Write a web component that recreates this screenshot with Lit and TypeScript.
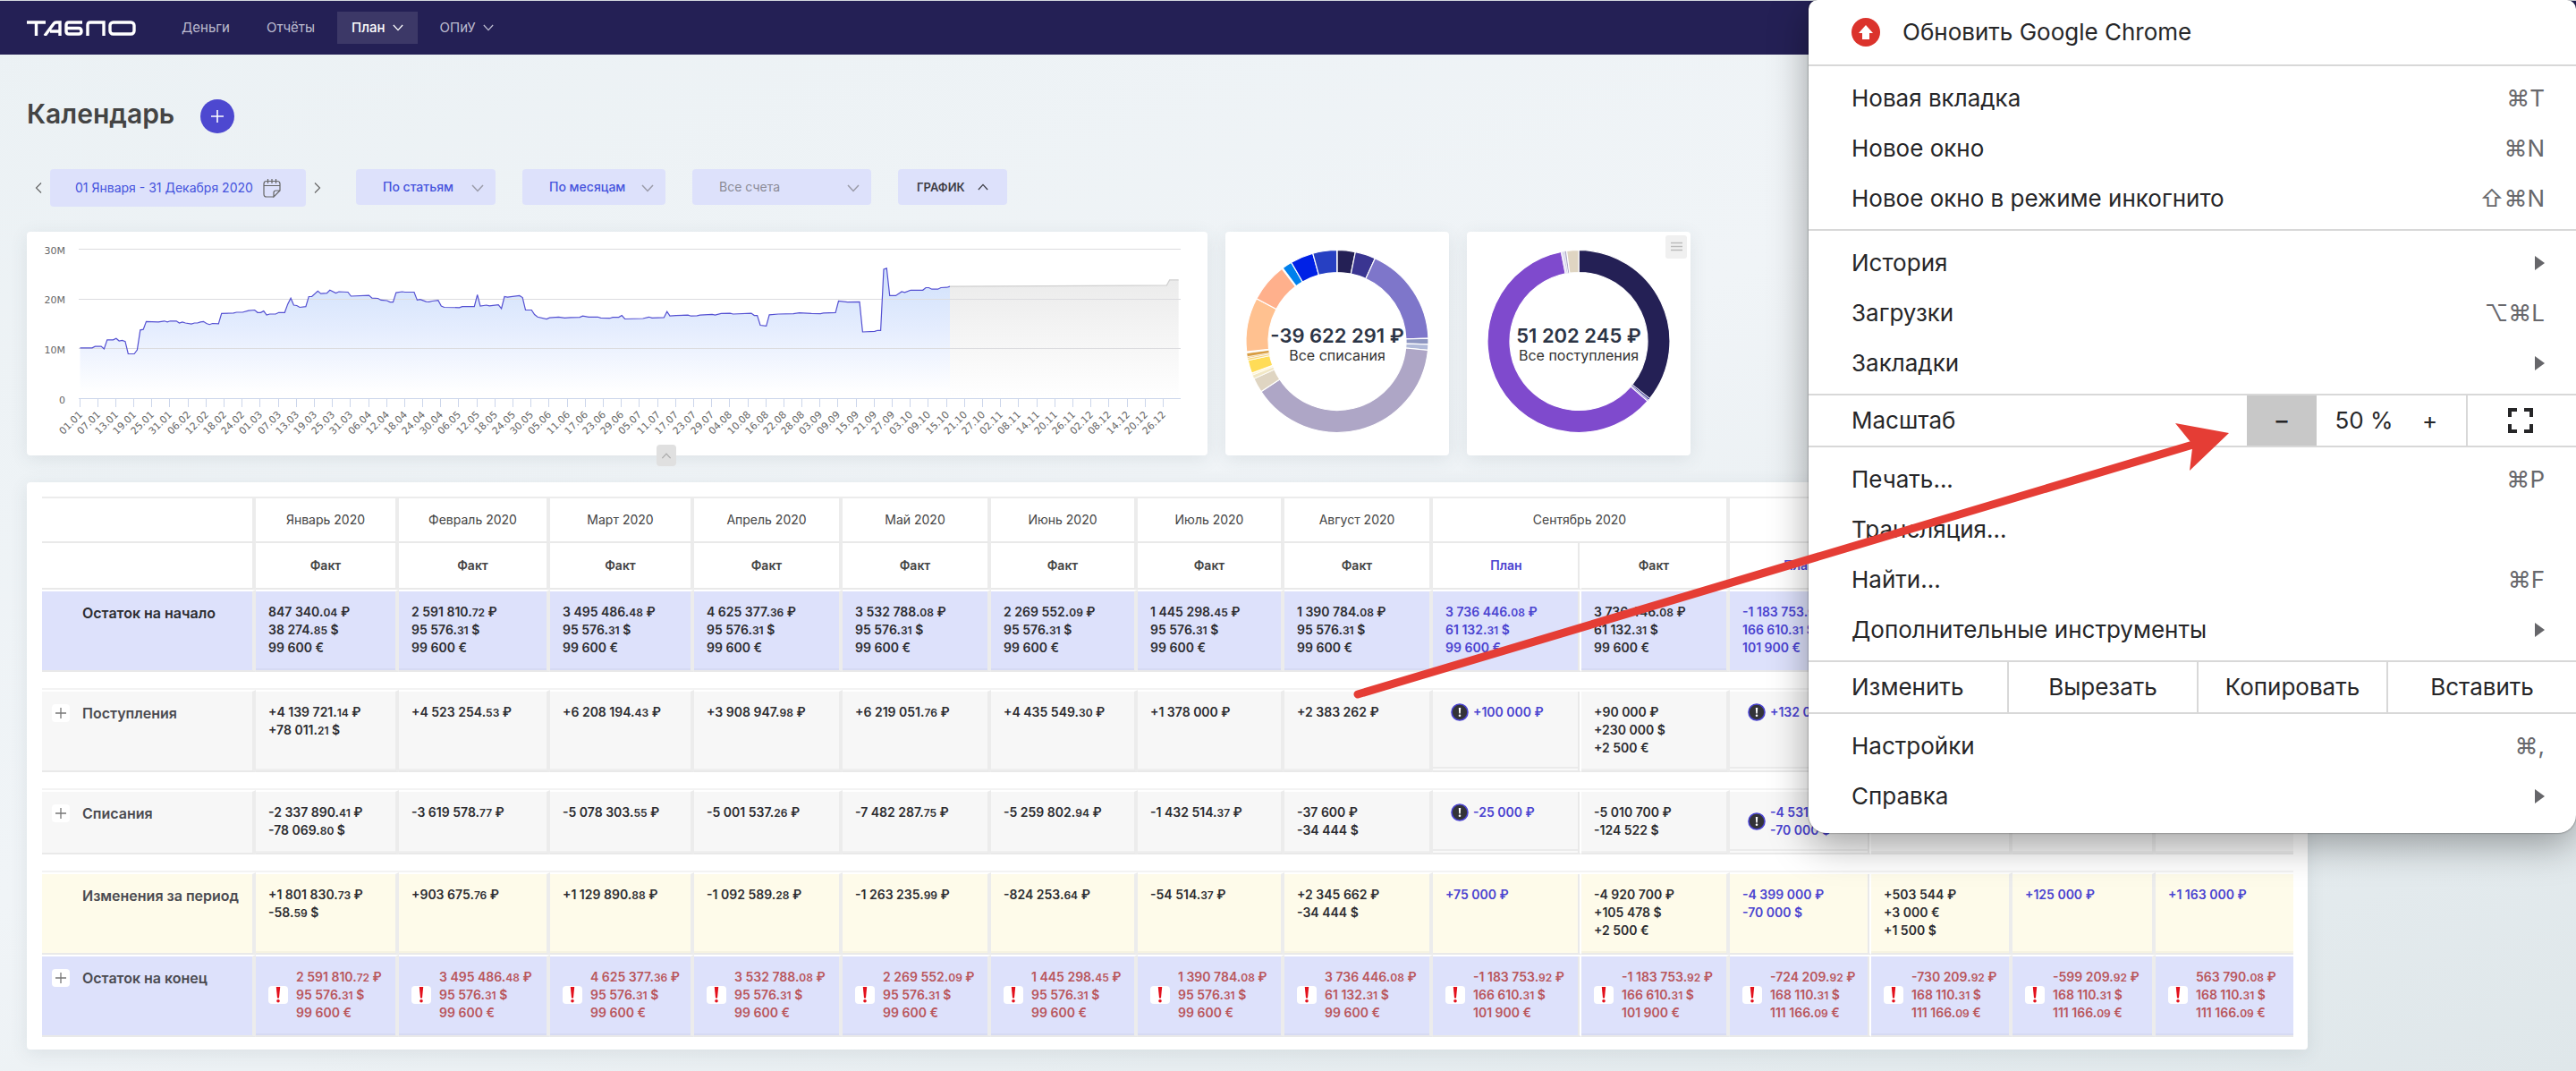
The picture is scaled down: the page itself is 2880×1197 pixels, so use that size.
import { LitElement, html, svg, css, nothing } from "lit";
import { customElement } from "lit/decorators.js";

type Cell = string[];

const LABEL_W = 239;
const COLS: { kind: "fact" | "plan"; w: number; title: string }[] = [
  { kind: "fact", w: 160, title: "Факт" }, { kind: "fact", w: 169, title: "Факт" },
  { kind: "fact", w: 161, title: "Факт" }, { kind: "fact", w: 166, title: "Факт" },
  { kind: "fact", w: 166, title: "Факт" }, { kind: "fact", w: 164, title: "Факт" },
  { kind: "fact", w: 164, title: "Факт" }, { kind: "fact", w: 166, title: "Факт" },
  { kind: "plan", w: 166, title: "План" }, { kind: "fact", w: 166, title: "Факт" },
  { kind: "plan", w: 158, title: "План" }, { kind: "fact", w: 158, title: "" },
  { kind: "plan", w: 160, title: "" }, { kind: "plan", w: 154, title: "" },
];
const MONTHS: { name: string; span: number }[] = [
  { name: "Январь 2020", span: 1 }, { name: "Февраль 2020", span: 1 }, { name: "Март 2020", span: 1 },
  { name: "Апрель 2020", span: 1 }, { name: "Май 2020", span: 1 }, { name: "Июнь 2020", span: 1 },
  { name: "Июль 2020", span: 1 }, { name: "Август 2020", span: 1 }, { name: "Сентябрь 2020", span: 2 },
  { name: "", span: 2 }, { name: "", span: 1 }, { name: "", span: 1 },
];

type Row = { label: string; tone: string; expand: boolean; mark?: "warn" | "info"; cells: Cell[]; dark?: boolean };
const ROWS: Row[] = [
  {
    label: "Остаток на начало", tone: "blue", expand: false, dark: true,
    cells: [
      ["847 340.04 ₽", "38 274.85 $", "99 600 €"],
      ["2 591 810.72 ₽", "95 576.31 $", "99 600 €"],
      ["3 495 486.48 ₽", "95 576.31 $", "99 600 €"],
      ["4 625 377.36 ₽", "95 576.31 $", "99 600 €"],
      ["3 532 788.08 ₽", "95 576.31 $", "99 600 €"],
      ["2 269 552.09 ₽", "95 576.31 $", "99 600 €"],
      ["1 445 298.45 ₽", "95 576.31 $", "99 600 €"],
      ["1 390 784.08 ₽", "95 576.31 $", "99 600 €"],
      ["3 736 446.08 ₽", "61 132.31 $", "99 600 €"],
      ["3 736 446.08 ₽", "61 132.31 $", "99 600 €"],
      ["-1 183 753.92 ₽", "166 610.31 $", "101 900 €"],
      [], [], [],
    ],
  },
  {
    label: "Поступления", tone: "gray", expand: true, mark: "info",
    cells: [
      ["+4 139 721.14 ₽", "+78 011.21 $"], ["+4 523 254.53 ₽"], ["+6 208 194.43 ₽"], ["+3 908 947.98 ₽"],
      ["+6 219 051.76 ₽"], ["+4 435 549.30 ₽"], ["+1 378 000 ₽"], ["+2 383 262 ₽"], ["+100 000 ₽"],
      ["+90 000 ₽", "+230 000 $", "+2 500 €"], ["+132 000 ₽"], [], [], [],
    ],
  },
  {
    label: "Списания", tone: "gray short", expand: true, mark: "info",
    cells: [
      ["-2 337 890.41 ₽", "-78 069.80 $"], ["-3 619 578.77 ₽"], ["-5 078 303.55 ₽"], ["-5 001 537.26 ₽"],
      ["-7 482 287.75 ₽"], ["-5 259 802.94 ₽"], ["-1 432 514.37 ₽"], ["-37 600 ₽", "-34 444 $"], ["-25 000 ₽"],
      ["-5 010 700 ₽", "-124 522 $"], ["-4 531 000 ₽", "-70 000 $"], [], [], [],
    ],
  },
  {
    label: "Изменения за период", tone: "yellow", expand: false,
    cells: [
      ["+1 801 830.73 ₽", "-58.59 $"], ["+903 675.76 ₽"], ["+1 129 890.88 ₽"], ["-1 092 589.28 ₽"],
      ["-1 263 235.99 ₽"], ["-824 253.64 ₽"], ["-54 514.37 ₽"], ["+2 345 662 ₽", "-34 444 $"], ["+75 000 ₽"],
      ["-4 920 700 ₽", "+105 478 $", "+2 500 €"], ["-4 399 000 ₽", "-70 000 $"],
      ["+503 544 ₽", "+3 000 €", "+1 500 $"], ["+125 000 ₽"], ["+1 163 000 ₽"],
    ],
  },
  {
    label: "Остаток на конец", tone: "blue red", expand: true, mark: "warn",
    cells: [
      ["2 591 810.72 ₽", "95 576.31 $", "99 600 €"],
      ["3 495 486.48 ₽", "95 576.31 $", "99 600 €"],
      ["4 625 377.36 ₽", "95 576.31 $", "99 600 €"],
      ["3 532 788.08 ₽", "95 576.31 $", "99 600 €"],
      ["2 269 552.09 ₽", "95 576.31 $", "99 600 €"],
      ["1 445 298.45 ₽", "95 576.31 $", "99 600 €"],
      ["1 390 784.08 ₽", "95 576.31 $", "99 600 €"],
      ["3 736 446.08 ₽", "61 132.31 $", "99 600 €"],
      ["-1 183 753.92 ₽", "166 610.31 $", "101 900 €"],
      ["-1 183 753.92 ₽", "166 610.31 $", "101 900 €"],
      ["-724 209.92 ₽", "168 110.31 $", "111 166.09 €"],
      ["-730 209.92 ₽", "168 110.31 $", "111 166.09 €"],
      ["-599 209.92 ₽", "168 110.31 $", "111 166.09 €"],
      ["563 790.08 ₽", "168 110.31 $", "111 166.09 €"],
    ],
  },
];

/* Balance by day of the year, in millions. */
const FACT: [number, number][] = [
  [0, 10.2], [4, 10.2], [5, 10.5], [7, 10.5], [8, 10], [9, 11.8], [11, 11.8], [12, 12.1], [13, 11.6], [14, 11.7],
  [15, 11.5], [16, 9], [18, 9], [19, 9.8], [20, 13.8], [21, 13.9], [22, 15.5], [26, 15.4], [28, 15.6], [29, 15.4],
  [30, 15.6], [32, 15.6], [33, 15.2], [34, 15.4], [35, 15.2], [37, 15], [38, 15.2], [39, 15.2], [40, 15.4], [41, 15.5],
  [42, 15.1], [43, 14.9], [44, 15.1], [46, 15.05], [47, 17.1], [51, 17.2], [52, 17.35], [54, 17.35], [56, 17.7],
  [58, 17.8], [59, 17.3], [60, 17.3], [61, 17.6], [62, 16.8], [63, 17], [65, 17], [66, 17.3], [68, 17.3], [69, 19],
  [70, 20.2], [71, 18.8], [72, 18.7], [73, 18.35], [75, 18.5], [76, 20.5], [77, 20.5], [79, 21.6], [80, 21.1],
  [82, 21.2], [83, 21.8], [85, 21.2], [86, 21.5], [89, 21.4], [90, 20.6], [96, 20.75], [97, 20.2], [99, 20.15],
  [100, 19.8], [102, 19.7], [103, 19.4], [104, 19.4], [105, 21.3], [107, 21.5], [108, 21.4], [111, 21.4], [112, 19.8],
  [113, 19.95], [115, 19.5], [116, 19.45], [117, 19.6], [119, 19.75], [120, 18.6], [121, 18.35], [126, 18.3],
  [127, 18.5], [131, 18.5], [132, 20.9], [133, 18.6], [135, 18.8], [136, 18.65], [139, 18.85], [140, 18.1],
  [141, 20.5], [142, 20.4], [146, 20.7], [147, 20.3], [148, 17.8], [150, 17.8], [151, 16.9], [152, 16.4], [155, 16],
  [156, 16.25], [159, 16.4], [161, 16.2], [163, 16.3], [166, 16.35], [167, 16.6], [169, 16.4], [172, 16.4],
  [173, 16.2], [176, 16.15], [177, 16.35], [179, 16.35], [180, 16.7], [181, 16], [187, 16.1], [189, 16.4],
  [190, 16.2], [194, 16.3], [195, 17.5], [196, 16.6], [198, 16.7], [202, 16.8], [203, 16.6], [205, 16.65],
  [206, 16.8], [210, 16.95], [211, 16.8], [213, 17.1], [216, 17.15], [217, 17], [223, 17.15], [224, 16.7],
  [225, 16.7], [226, 14.75], [228, 14.6], [229, 16.85], [232, 17], [237, 17.05], [239, 17.25], [243, 17.1],
  [246, 17.05], [247, 17.2], [251, 17.3], [252, 19.6], [255, 19.4], [259, 19.45], [260, 13.4], [264, 13.5],
  [265, 13.7], [266, 13.7], [267, 26], [268, 26.2], [269, 20.7], [271, 20.7], [273, 21.5], [274, 21.35],
  [276, 21.8], [280, 21.8], [281, 22.3], [282, 22.3], [283, 22], [285, 22], [286, 22.3], [288, 22.35], [289, 22.55],
];
const FORECAST: [number, number][] = [[289, 22.55], [361, 22.75], [362, 23.85], [365, 23.85]];

/* [end angle, colour]; an empty colour leaves a gap. */
const OUT_SEGMENTS: [number, string][] = [
  [11.5, "#242055"], [24.5, "#3a3591"], [88.1, "#7e76ca"], [91.9, "#8f97c2"], [95.6, "#b1bad9"], [236.6, "#aea6c6"],
  [245.9, "#dfd5c2"], [248.3, "#f1e7c4"], [249.6, "#fff3cd"], [258, "#ffdc57"], [259.4, "#f7d77e"], [260.3, "#f2b95a"],
  [262.6, "#d89d43"], [263.4, ""], [297.9, "#ffc190"], [322.7, "#ffb08c"], [323.4, ""], [329.8, "#0080ec"],
  [344.5, "#0021e6"], [359.8, "#2740c2"],
];
const IN_SEGMENTS: [number, string][] = [
  [128.9, "#242055"], [130, "#3a3591"], [131, "#7e76ca"], [348.9, "#7f4acd"], [350, "#dcd3f0"], [351, "#b1bad9"],
  [352.4, "#aea6c6"], [360, "#dfd5c2"],
];

const px = (d: number) => 59.5 + d * 3.365;
const py = (v: number) => 186.5 - v * 5.56;
const line = (p: [number, number][]) => p.map(([d, v]) => `${px(d).toFixed(1)},${py(v).toFixed(1)}`).join(" ");
const area = (p: [number, number][]) =>
  `${px(p[0][0]).toFixed(1)},186 ${line(p)} ${px(p[p.length - 1][0]).toFixed(1)},186`;

const dayLabel = (d: number) => {
  const t = new Date(Date.UTC(2020, 0, 1 + d));
  return `${String(t.getUTCDate()).padStart(2, "0")}.${String(t.getUTCMonth() + 1).padStart(2, "0")}`;
};

const ring = (a: number, b: number) => {
  const at = (deg: number, r: number) => {
    const t = (deg * Math.PI) / 180;
    return `${(125 + r * Math.sin(t)).toFixed(2)} ${(122.5 - r * Math.cos(t)).toFixed(2)}`;
  };
  const big = b - a > 180 ? 1 : 0;
  return `M${at(a, 102)}A102 102 0 ${big} 1 ${at(b, 102)}L${at(b, 77)}A77 77 0 ${big} 0 ${at(a, 77)}Z`;
};

const chevron = (cls: string, flip = false) => html`<svg class=${cls} viewBox="0 0 14 9" aria-hidden="true">
  <path d=${flip ? "M1 8L7 1.5L13 8" : "M1 1L7 7.5L13 1"} fill="none" stroke="currentColor" stroke-width="1.5"/>
</svg>`;

@customElement("tablo-header")
export class TabloHeader extends LitElement {
  static styles = css`
    :host { display: block; border-top: 1px solid #d4d9df; background: #242055; }
    .bar { display: flex; align-items: center; height: 60px; padding: 0 30px; box-sizing: border-box; }
    .logo { width: 122px; height: 17px; margin-right: 35px; }
    nav { display: flex; align-items: center; gap: 9px; }
    a { display: flex; align-items: center; gap: 8px; height: 36px; padding: 0 16px; box-sizing: border-box;
      font: 400 15px/20px Inter, Roboto, sans-serif; color: #bdbcd0; text-decoration: none; }
    .on { background: #3c3867; color: #fff; font-weight: 500; }
    .chev { width: 12px; height: 8px; }
  `;
  render() {
    return html`<header class="bar">
      <svg class="logo" viewBox="0 0 122 17" role="img" aria-label="ТАБЛО" fill="none" stroke="#fff" stroke-width="3.4">
        <path d="M0 2H21M10.500 2V17"/>
        <path d="M20 17L30 3.500Q31 2 33 2H37V17M26 12H37"/>
        <path d="M62 2H47Q44 2 44 5V12Q44 15 47 15H58Q61 15 61 12Q61 8.500 58 8.500H44"/>
        <path d="M68 17V5Q68 2 71 2H86V17"/>
        <rect x="93" y="2" width="27" height="13" rx="3.500"/>
      </svg>
      <nav>
        <a href="#">Деньги</a>
        <a href="#">Отчёты</a>
        <a href="#" class="on">План ${chevron("chev")}</a>
        <a href="#">ОПиУ ${chevron("chev")}</a>
      </nav>
    </header>`;
  }
}

@customElement("tablo-filters")
export class TabloFilters extends LitElement {
  static styles = css`
    :host { display: flex; align-items: flex-start; gap: 30px; font: 500 14px/20px Inter, Roboto, sans-serif; }
    button { font: inherit; border: 0; margin: 0; cursor: pointer; }
    .period { display: flex; align-items: center; width: 338px; }
    .step { display: grid; place-items: center; width: 26px; height: 42px; padding: 0; background: none; color: #666; }
    .step svg { width: 8px; height: 12px; }
    .date { display: flex; align-items: center; justify-content: space-between; flex: 1; height: 42px;
      padding: 0 28px; border-radius: 4px; background: #dde1fb; color: #4553dd; font-weight: 400; white-space: nowrap; }
    .cal { width: 20px; height: 21px; color: #666; }
    .pick { position: relative; display: flex; }
    select { appearance: none; width: 160px; height: 40px; padding: 0 30px; border: 0; border-radius: 4px;
      background: #dde1fb; color: #4553dd; font: inherit; }
    .narrow select { width: 156px; }
    .wide select { width: 200px; color: #8b8b96; font-weight: 400; }
    .arrow { position: absolute; right: 13px; top: 17px; width: 14px; height: 9px; color: #9a9ba8; pointer-events: none; }
    .toggle { display: flex; align-items: center; justify-content: space-between; width: 122px; height: 40px;
      padding: 0 21px; border-radius: 4px; background: #dde1fb; color: #3d3d46; font-size: 13px; font-weight: 600; }
    .tick { width: 12px; height: 8px; }
  `;
  render() {
    const pick = (cls: string, label: string, text: string) => html`<div class="pick ${cls}">
      <select aria-label=${label}><option>${text}</option></select>${chevron("arrow")}
    </div>`;
    return html`
      <div class="period">
        <button class="step" aria-label="Назад"><svg viewBox="0 0 8 12"><path d="M7 0.500L1.500 6L7 11.500" fill="none" stroke="currentColor" stroke-width="1.200"/></svg></button>
        <button class="date">01 Января - 31 Декабря 2020
          <svg class="cal" viewBox="0 0 20 21" fill="none" stroke="currentColor" stroke-width="1.200">
            <path d="M12 20H4Q1 20 1 17V5.500Q1 2.500 4 2.500H16Q19 2.500 19 5.500V13L12 20V15.500Q12 13 14.500 13H19M1 7.500H19M5.500 0V5M10 0V5M14.500 0V5"/>
          </svg>
        </button>
        <button class="step" aria-label="Вперёд"><svg viewBox="0 0 8 12"><path d="M1 0.500L6.500 6L1 11.500" fill="none" stroke="currentColor" stroke-width="1.200"/></svg></button>
      </div>
      ${pick("narrow", "Группировка", "По статьям")}
      ${pick("", "Период", "По месяцам")}
      ${pick("wide", "Счета", "Все счета")}
      <button class="toggle">ГРАФИК ${chevron("tick", true)}</button>`;
  }
}

@customElement("balance-chart")
export class BalanceChart extends LitElement {
  static styles = css`
    :host { display: block; position: relative; width: 1320px; height: 250px; border-radius: 4px; background: #fff;
      box-shadow: 0 4px 20px rgba(60, 80, 90, 0.1); }
    .plot { display: block; width: 100%; height: 100%; }
    .lab { font: 11px "DejaVu Sans", sans-serif; fill: #666; }
    .fold { position: absolute; left: 704px; bottom: -12px; width: 22px; height: 24px; padding: 0; border: 0;
      border-radius: 4px; background: #e0e0e0; color: #aaa; display: grid; place-items: center; }
    .up { width: 12px; height: 7px; }
  `;
  render() {
    const ticks = Array.from({ length: 61 }, (_, i) => i * 6);
    return html`<svg class="plot" viewBox="0 0 1320 250">
        <defs>
          <linearGradient id="fb" gradientUnits="userSpaceOnUse" x1="0" y1="40" x2="0" y2="180">
            <stop offset="0" stop-color="#cfe0fb"/><stop offset="0.500" stop-color="#e5edfe"/><stop offset="1" stop-color="#ffffff"/>
          </linearGradient>
          <linearGradient id="fg" gradientUnits="userSpaceOnUse" x1="0" y1="52" x2="0" y2="186">
            <stop offset="0" stop-color="#ebebeb"/><stop offset="1" stop-color="#ffffff"/>
          </linearGradient>
        </defs>
        <polygon points=${area(FACT)} fill="url(#fb)"/>
        <polygon points=${area(FORECAST)} fill="url(#fg)"/>
        ${[30, 20, 10].map((v) => svg`<path d="M58 ${Math.floor(py(v))}.5H1290" stroke="#dcdcdf"/>`)}
        <path d="M58 186.500H1290" stroke="#ccd6eb"/>
        ${ticks.map((d) => svg`<path d="M${Math.round(px(d)) - 0.5} 187V196" stroke="#ccd6eb"/>`)}
        <polyline points=${line(FACT)} fill="none" stroke="#5450d2" stroke-width="1.200"/>
        <polyline points=${line(FORECAST)} fill="none" stroke="#cfcfcf" stroke-width="1.200"/>
        ${[30, 20, 10, 0].map((v) => svg`<text class="lab" x="43" y=${Math.round(py(v)) + 5} text-anchor="end">${v ? v + "M" : "0"}</text>`)}
        ${ticks.map((d) => svg`<text class="lab" text-anchor="end" transform="translate(${Math.round(px(d)) + 3} 205) rotate(-45)">${dayLabel(d)}</text>`)}
      </svg>
      <button class="fold" aria-label="Свернуть график">${chevron("up", true)}</button>`;
  }
}

@customElement("donut-card")
export class DonutCard extends LitElement {
  static properties = { total: {}, caption: {}, segments: { attribute: false }, menu: { type: Boolean } };
  declare total: string;
  declare caption: string;
  declare segments: [number, string][];
  declare menu: boolean;
  static styles = css`
    :host { display: grid; position: relative; width: 250px; height: 250px; border-radius: 4px; background: #fff;
      box-shadow: 0 4px 20px rgba(60, 80, 90, 0.1); font-family: Inter, Roboto, sans-serif; }
    .ring { grid-area: 1 / 1; width: 250px; height: 250px; }
    .mid { grid-area: 1 / 1; z-index: 1; display: flex; flex-direction: column; align-items: center; padding-top: 104px;
      white-space: nowrap; }
    .sum { font-size: 22px; line-height: 24px; font-weight: 600; color: #2c3445; }
    .cap { font-size: 16px; line-height: 20px; color: #333; }
    .menu { position: absolute; top: 4px; right: 4px; z-index: 2; width: 24px; height: 26px; padding: 0; border: 0;
      border-radius: 3px; background: #f0f0f0; display: grid; place-items: center; }
    .menu svg { width: 13px; height: 12px; }
  `;
  render() {
    let from = 0;
    return html`<svg class="ring" viewBox="0 0 250 250" aria-hidden="true">
        ${this.segments.map(([to, color]) => {
          const d = ring(from, to);
          const thin = to - from < 2.5;
          from = to;
          return color ? svg`<path d=${d} fill=${color} stroke="#fff" stroke-width=${thin ? 0.7 : 1.2}/>` : nothing;
        })}
      </svg>
      <div class="mid"><span class="sum">${this.total}</span><span class="cap">${this.caption}</span></div>
      ${this.menu
        ? html`<button class="menu" aria-label="Меню диаграммы"><svg viewBox="0 0 13 12"><path d="M0 1.500H13M0 5.500H13M0 9.500H13" stroke="#bbb" stroke-width="1.300"/></svg></button>`
        : nothing}`;
  }
}

@customElement("plan-table")
export class PlanTable extends LitElement {
  static styles = css`
    :host { display: block; width: max-content; padding: 16px 16px 14px 17px; border-radius: 4px; background: #fff;
      box-shadow: 0 4px 20px rgba(60, 80, 90, 0.1); font-family: Inter, Roboto, sans-serif; }
    table { table-layout: fixed; width: 2517px; border-collapse: separate; border-spacing: 0; }
    th, td { box-sizing: border-box; padding: 0; border-right: 4px solid #ececec; border-bottom: 2px solid #e9e9e9; }
    tr > :last-child { border-right: 0; }
    thead th { height: 52px; font-size: 14px; line-height: 20px; font-weight: 400; color: #444; text-align: center; }
    thead .first th { border-top: 2px solid #ececec; }
    thead .kinds th { font-weight: 600; }
    thead .kinds .plan { color: #4a43d0; }
    .data > * { height: 92px; padding-top: 13px; border-top: 2px solid #fff; vertical-align: top; text-align: left; }
    .short > * { height: 72px; }
    .data td { padding-left: 14px; font-size: 14px; line-height: 20px; font-weight: 600; color: #2c2c30; white-space: nowrap;
      box-shadow: inset 0 -2px rgba(60, 60, 60, 0.04); }
    .data .plan { color: #4a43d0; }
    .blue > * { background: #dde1fb; }
    .gray > * { background: #f7f7f7; }
    .yellow > * { background: #fefbea; }
    thead .pair, .data .pair { border-right: 2px solid #fff; box-shadow: inset -2px 0 #e9e9e9; }
    .gray .pair { box-shadow: inset -2px 0 #e9e9e9, inset 0 -2px #f9f9f9, inset 0 -4px #ebebeb; }
    .red td, .red .plan { color: #b9565c; }
    .gap td { height: 20px; border-right: 0; border-bottom-color: #f3f3f3; }
    .sum { height: 20px; }
    small { font-size: 12px; line-height: 12px; }
    .name { display: flex; align-items: center; gap: 14px; padding-left: 11px; font-size: 16px; line-height: 22px;
      font-weight: 600; color: #4a4a50; white-space: nowrap; }
    .strong { color: #2c2c30; }
    .slot, .open { width: 20px; height: 20px; flex: none; }
    .open { display: grid; place-items: center; padding: 0; border: 0; border-radius: 4px; background: #fff; }
    .open svg { width: 12px; height: 12px; }
    .marked { display: flex; align-items: center; gap: 9px; width: max-content; }
    .info { gap: 5px; padding-left: 6px; }
    .warn i { width: 22px; height: 20px; border-radius: 4px; background: #fff; display: grid; place-items: center; }
    .info i { width: 20px; height: 20px; }
    .marked svg { display: block; }
    .warn svg { width: 6px; height: 18px; }
    .info svg { width: 20px; height: 20px; }
  `;
  private money(s: string) {
    const m = /^(.*)\.(\d\d)(.*)$/.exec(s);
    return m ? html`<div class="sum">${m[1]}.<small>${m[2]}</small>${m[3]}</div>` : html`<div class="sum">${s}</div>`;
  }
  private cell(row: Row, c: Cell, i: number) {
    const plan = COLS[i].kind === "plan";
    const pair = i === 8 || i === 10;
    const lines = c.map((s) => this.money(s));
    let body: unknown = lines;
    if (c.length && row.mark === "warn") {
      body = html`<div class="marked warn"><i><svg viewBox="0 0 6 18"><path d="M0.800 0H5.200L4 12.500H2Z" fill="#e3101c"/><circle cx="3" cy="15.800" r="1.800" fill="#e3101c"/></svg></i><div>${lines}</div></div>`;
    } else if (c.length && plan && row.mark === "info") {
      body = html`<div class="marked info"><i><svg viewBox="0 0 20 20"><circle cx="10" cy="10" r="9" fill="#333338" stroke="#4a43d0" stroke-width="1.600"/><path d="M8.800 5H11.200L10.800 11.500H9.200Z" fill="#fff"/><circle cx="10" cy="13.800" r="1.300" fill="#fff"/></svg></i><div>${lines}</div></div>`;
    }
    return html`<td class="${plan ? "plan" : ""} ${pair ? "pair" : ""}">${body}</td>`;
  }
  render() {
    return html`<table>
      <colgroup><col style="width:${LABEL_W}px">${COLS.map((c) => html`<col style="width:${c.w}px">`)}</colgroup>
      <thead>
        <tr class="first"><th></th>${MONTHS.map((m) => html`<th colspan=${m.span} scope="col">${m.name}</th>`)}</tr>
        <tr class="kinds"><th></th>${COLS.map((c, i) => html`<th scope="col" class="${c.kind} ${i === 8 || i === 10 ? "pair" : ""}">${c.title}</th>`)}</tr>
      </thead>
      <tbody>
        ${ROWS.map((r, n) => html`
          <tr class="data ${r.tone}">
            <th scope="row"><div class="name ${r.dark ? "strong" : ""}">
              ${r.expand
                ? html`<button class="open" aria-label="Развернуть: ${r.label}"><svg viewBox="0 0 12 12"><path d="M6 0V12M0 6H12" stroke="#777" stroke-width="1.300"/></svg></button>`
                : html`<span class="slot"></span>`}
              ${r.label}</div></th>
            ${r.cells.map((c, i) => this.cell(r, c, i))}
          </tr>
          ${n < 3 ? html`<tr class="gap"><td colspan="15"></td></tr>` : nothing}`)}
      </tbody>
    </table>`;
  }
}

@customElement("browser-menu")
export class BrowserMenu extends LitElement {
  static styles = css`
    :host { display: block; width: 858px; box-sizing: border-box; padding-bottom: 7px; background: #fff; border-radius: 10px 10px 20px 20px;
      box-shadow: 0 0 2px rgba(0, 0, 0, 0.6), 0 12px 44px rgba(0, 0, 0, 0.36); font: 400 26px/32px Inter, Roboto, sans-serif; color: #262628; }
    button { font: inherit; color: inherit; border: 0; margin: 0; padding: 0; background: none; text-align: left; }
    .update { display: flex; align-items: center; gap: 25px; width: 100%; height: 72px; padding: 0 48px; }
    .update svg { width: 32px; height: 32px; }
    .group { padding: 8px 0 6px; border-top: 2px solid #d8d8d8; }
    .item { display: flex; align-items: center; justify-content: space-between; width: 100%; height: 56px; padding: 0 35px 0 48px; }
    .keys { color: #68686c; font-family: Inter, "DejaVu Sans", sans-serif; }
    .tri { width: 11px; height: 16px; }
    .row { display: flex; height: 56px; border-top: 2px solid #d8d8d8; }
    .title { flex: 1; padding-left: 48px; align-self: center; }
    .row button { text-align: center; }
    .minus { width: 78px; background: #c8c8c8; font-weight: 500; }
    .value { width: 106px; text-align: center; align-self: center; }
    .row .plus { box-sizing: border-box; width: 61px; padding-right: 20px; }
    .full { display: grid; place-items: center; width: 123px; border-left: 1px solid #d8d8d8; }
    .row .full { border-left: 2px solid #d8d8d8; padding-right: 4px; box-sizing: border-box; }
    .full svg { width: 28px; height: 28px; }
    .row .edit { box-sizing: border-box; width: 212px; border-left: 2px solid #d8d8d8; }
    .row .lead { flex: 1; padding-left: 48px; text-align: left; }
  `;
  private item(text: string, key?: string) {
    return html`<button class="item">${text}${key === ">"
      ? html`<svg class="tri" viewBox="0 0 11 16"><path d="M0 0L11 8L0 16Z" fill="#66666a"/></svg>`
      : key ? html`<span class="keys">${key}</span>` : nothing}</button>`;
  }
  render() {
    return html`
      <button class="update"><svg viewBox="0 0 32 32"><circle cx="16" cy="16" r="16" fill="#db332c"/><path d="M16 8L24 17H20V24H12V17H8Z" fill="#fff"/></svg>Обновить Google Chrome</button>
      <div class="group">
        ${this.item("Новая вкладка", "⌘T")}${this.item("Новое окно", "⌘N")}${this.item("Новое окно в режиме инкогнито", "⇧⌘N")}
      </div>
      <div class="group">${this.item("История", ">")}${this.item("Загрузки", "⌥⌘L")}${this.item("Закладки", ">")}</div>
      <div class="row">
        <span class="title">Масштаб</span>
        <button class="minus" aria-label="Уменьшить">–</button>
        <span class="value">50 %</span>
        <button class="plus" aria-label="Увеличить">+</button>
        <button class="full" aria-label="Во весь экран"><svg viewBox="0 0 28 28" fill="none" stroke="#262628" stroke-width="4"><path d="M2 10V2H10M18 2H26V10M26 18V26H18M10 26H2V18"/></svg></button>
      </div>
      <div class="group">
        ${this.item("Печать...", "⌘P")}${this.item("Трансляция...")}${this.item("Найти...", "⌘F")}${this.item("Дополнительные инструменты", ">")}
      </div>
      <div class="row">
        <button class="lead">Изменить</button>
        <button class="edit">Вырезать</button>
        <button class="edit">Копировать</button>
        <button class="edit">Вставить</button>
      </div>
      <div class="group">${this.item("Настройки", "⌘,")}${this.item("Справка", ">")}</div>`;
  }
}

@customElement("app-root")
export class AppRoot extends LitElement {
  static styles = css`
    :host { display: block; position: relative; min-height: 100vh; overflow: hidden;
      background: linear-gradient(160deg, #ebf1f4 0%, #f0f4f7 45%, #dfe7ea 100%); }
    main { display: flex; flex-direction: column; padding: 50px 30px 24px; }
    .head { display: flex; align-items: flex-start; gap: 29px; height: 38px; margin-bottom: 40px; }
    h1 { margin: 0; font: 600 30px/32px Inter, Roboto, sans-serif; color: #444; }
    .add { width: 38px; height: 38px; padding: 0; border: 0; border-radius: 50%; background: #4d48d0; display: grid; place-items: center; }
    .add svg { width: 14px; height: 14px; }
    .charts { display: flex; gap: 20px; margin: 28px 0 30px; }
    .popup { position: absolute; top: 0; right: 0; }
    .pointer { position: absolute; left: 1500px; top: 460px; width: 1000px; height: 330px; pointer-events: none; }
  `;
  render() {
    return html`
      <tablo-header></tablo-header>
      <main>
        <div class="head">
          <h1>Календарь</h1>
          <button class="add" aria-label="Добавить"><svg viewBox="0 0 14 14"><path d="M7 0V14M0 7H14" stroke="#fff" stroke-width="1.600"/></svg></button>
        </div>
        <tablo-filters></tablo-filters>
        <div class="charts">
          <balance-chart></balance-chart>
          <donut-card total="-39 622 291 ₽" caption="Все списания" .segments=${OUT_SEGMENTS}></donut-card>
          <donut-card total="51 202 245 ₽" caption="Все поступления" .segments=${IN_SEGMENTS} menu></donut-card>
        </div>
        <plan-table></plan-table>
      </main>
      <browser-menu class="popup"></browser-menu>
      <svg class="pointer" viewBox="1500 460 1000 330" aria-hidden="true">
        <path d="M1518 776L2455 496" stroke="#e53d35" stroke-width="9" stroke-linecap="round"/>
        <path d="M2492 484L2432 473L2449 494L2451 501L2448 526Z" fill="#e53d35"/>
      </svg>`;
  }
}
